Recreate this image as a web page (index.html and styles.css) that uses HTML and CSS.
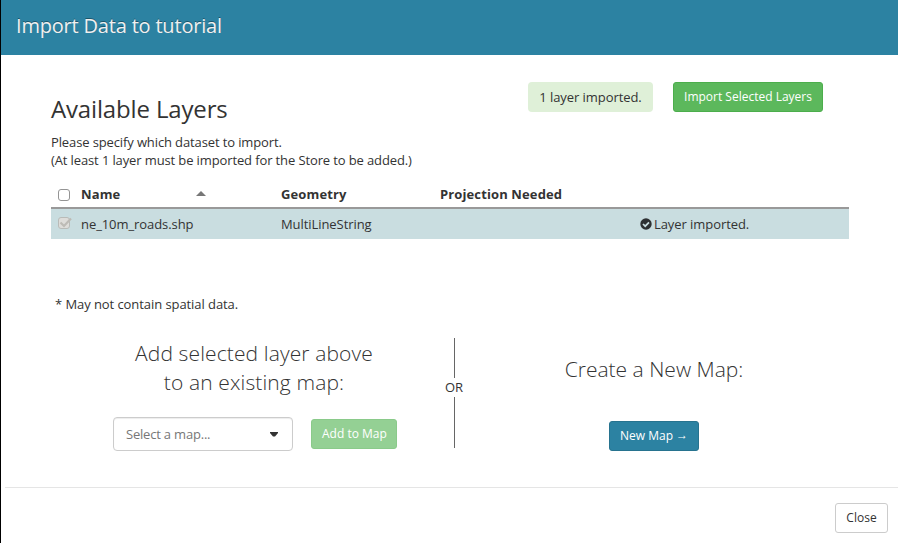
FILE: index.html
```
<!DOCTYPE html>
<html lang="en">
<head>
<meta charset="utf-8">
<title>Import Data to tutorial</title>
<link rel="stylesheet" href="styles.css">
</head>
<body>
<div class="modal">
  <header class="modal-header"><h1>Import Data to tutorial</h1></header>
  <main class="modal-body">
    <section class="top">
      <div class="intro">
        <h2>Available Layers</h2>
        <p>Please specify which dataset to import.<br>(At least 1 layer must be imported for the Store to be added.)</p>
      </div>
      <div class="actions">
        <span class="alert">1 layer imported.</span>
        <button class="btn btn-success">Import Selected Layers</button>
      </div>
    </section>
    <div class="grid">
      <div class="row head">
        <span class="check"></span>
        <span class="name">Name <svg class="sort" width="10" height="5" viewBox="0 0 10 5"><path d="M0 5L5 0l5 5z" fill="#777"/></svg></span>
        <span>Geometry</span>
        <span>Projection Needed</span>
        <span></span>
      </div>
      <div class="row item">
        <span class="check disabled"><svg width="14" height="12" viewBox="0 0 14 12"><path d="M2.500 5.500l3.500 3.500L13 1.500" fill="none" stroke="#bdbbb6" stroke-width="2.200"/></svg></span>
        <span>ne_10m_roads.shp</span>
        <span>MultiLineString</span>
        <span></span>
        <span class="status"><svg width="12" height="12" viewBox="0 0 12 12"><circle cx="6" cy="6" r="5.700" fill="#2d3032"/><path d="M3 6l2.200 2.200L9 4.300" fill="none" stroke="#c9dde0" stroke-width="1.700"/></svg>Layer imported.</span>
      </div>
    </div>
    <p class="note">* May not contain spatial data.</p>
    <section class="choices">
      <div class="existing">
        <h3>Add selected layer above<br>to an existing map:</h3>
        <div class="controls">
          <div class="select">Select a map...<svg width="8" height="5" viewBox="0 0 8 5"><path d="M0 0h8v1L5 4.500H3L0 1z" fill="#333"/></svg></div>
          <button class="btn btn-success faded">Add to Map</button>
        </div>
      </div>
      <div class="divider"><span>OR</span></div>
      <div class="new">
        <h3>Create a New Map:</h3>
        <button class="btn btn-primary">New Map <span class="arrow">→</span></button>
      </div>
    </section>
  </main>
  <footer class="modal-footer"><button class="btn btn-default">Close</button></footer>
</div>
</body>
</html>
```

FILE: styles.css
```
* { box-sizing: border-box; }
body {
  margin: 0;
  background: #fff;
  color: #333;
  font: 13px/18px "Open Sans", "Noto Sans", sans-serif;
  letter-spacing: -.07px;
}
h1, h2, h3, p { margin: 0; }
.modal {
  height: 543px;
  border-left: 1px solid #000;
  display: flex;
  flex-direction: column;
  overflow: hidden;
}
.modal-header {
  height: 55px;
  padding: 12px 15px;
  background: #2c82a2;
  color: #f0f0f0;
}
.modal-header h1 {
  font-size: 20px;
  line-height: 28px;
  font-weight: 400;
  letter-spacing: -.19px;
  text-shadow: 0 -1px 0 rgba(0, 0, 0, .35);
}
.modal-body { height: 432px; padding: 27px 49px 0 50px; }
.top { display: flex; justify-content: space-between; height: 98px; }
.intro { padding-top: 12px; letter-spacing: -.12px; }
.intro h2 {
  font-size: 24px;
  line-height: 30px;
  font-weight: 400;
  letter-spacing: -.15px;
  margin-bottom: 9px;
}
.actions { display: flex; align-items: flex-start; gap: 20px; margin-right: 26px; }
.alert {
  width: 125px;
  height: 30px;
  line-height: 30px;
  text-align: center;
  background: #dff0d8;
  border-radius: 4px;
}
.btn {
  height: 30px;
  padding: 0 10px;
  border: 1px solid;
  border-radius: 3px;
  color: #fff;
  font: 12px/18px "Open Sans", "Noto Sans", sans-serif;
  white-space: nowrap;
}
.btn-success { width: 150px; background: #5cb85c; border-color: #4cae4c; }
.btn-primary { width: 90px; background: #2c82a2; border-color: #27738f; }
.btn-default { width: 53px; background: #fff; border-color: #ccc; color: #333; }
.faded { width: 86px; opacity: .65; }
.arrow { line-height: 12px; vertical-align: 1px; }
.row {
  display: grid;
  grid-template-columns: 30px 200px 159px 200px 1fr;
  align-items: center;
  height: 30px;
}
.head {
  height: 29px;
  font-weight: 700;
  letter-spacing: .12px;
  border-bottom: 2px solid #999;
}
.item { background: #c9dde0; }
.check {
  width: 12px;
  height: 12px;
  margin-left: 7px;
  border: 1px solid #949494;
  border-radius: 3px;
  background: #fff;
}
.head .check { margin-top: 2px; }
.check.disabled { margin-top: -2px; background: #deddda; border-color: #b9bbb8; }
.disabled svg { display: block; margin: -1px; }
.name { display: flex; align-items: center; }
.sort { margin-left: 76px; }
.status { display: flex; align-items: center; gap: 2px; }
.note { margin: 56px 0 0 4px; }
.choices { display: flex; margin-top: 25px; height: 110px; }
.existing { width: 393px; text-align: center; }
h3 { font-size: 21px; line-height: 29px; font-weight: 300; letter-spacing: 0; }
.existing h3 { margin: 1px 0 20px 13px; letter-spacing: .12px; }
.controls { display: flex; align-items: center; gap: 18px; margin-left: 62px; }
.select {
  display: flex;
  align-items: center;
  justify-content: space-between;
  width: 180px;
  height: 34px;
  padding: 0 14px 0 12px;
  border: 1px solid #ccc;
  border-radius: 4px;
  color: #777;
  letter-spacing: -.2px;
  box-shadow: inset 0 1px 1px rgba(0, 0, 0, .075);
}
.divider { width: 20px; display: flex; flex-direction: column; align-items: center; }
.divider::before, .divider::after { content: ""; width: 1px; background: #666; }
.divider::before { height: 40px; }
.divider::after { height: 51px; }
.divider span { height: 19px; }
.new { width: 200px; margin-left: 90px; text-align: center; }
.new h3 { margin: 17px 0 37px; }
.modal-footer {
  display: flex;
  justify-content: flex-end;
  height: 56px;
  margin-left: 4px;
  padding: 15px 10px 0;
  border-top: 1px solid #e5e5e5;
}
```
